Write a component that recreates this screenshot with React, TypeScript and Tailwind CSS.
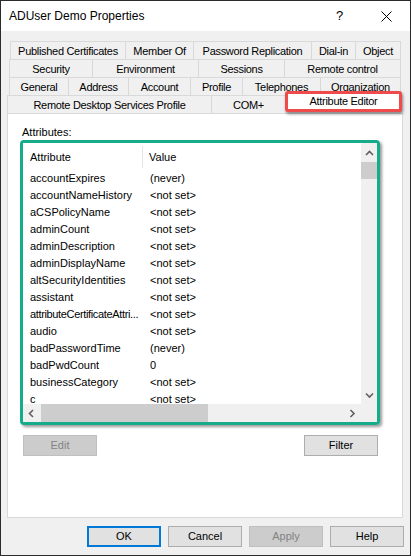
import React from "react";

type Tab = { label: string; w: string };

const row1: Tab[] = [
  { label: "Published Certificates", w: "w-[115px]" },
  { label: "Member Of", w: "w-[68px]" },
  { label: "Password Replication", w: "w-[118px]" },
  { label: "Dial-in", w: "w-[44px]" },
  { label: "Object", w: "w-[46px]" },
];
const row2: Tab[] = [
  { label: "Security", w: "w-[83px]" },
  { label: "Environment", w: "w-[106px]" },
  { label: "Sessions", w: "w-[86px]" },
  { label: "Remote control", w: "w-[117px]" },
];
const row3: Tab[] = [
  { label: "General", w: "w-[59px]" },
  { label: "Address", w: "w-[60px]" },
  { label: "Account", w: "w-[62px]" },
  { label: "Profile", w: "w-[52px]" },
  { label: "Telephones", w: "w-[78px]" },
  { label: "Organization", w: "w-[81px]" },
];
const row4: Tab[] = [
  { label: "Remote Desktop Services Profile", w: "w-[204px]" },
  { label: "COM+", w: "w-[74px]" },
];

const attrs: [string, string][] = [
  ["accountExpires", "(never)"],
  ["accountNameHistory", "<not set>"],
  ["aCSPolicyName", "<not set>"],
  ["adminCount", "<not set>"],
  ["adminDescription", "<not set>"],
  ["adminDisplayName", "<not set>"],
  ["altSecurityIdentities", "<not set>"],
  ["assistant", "<not set>"],
  ["attributeCertificateAttri...", "<not set>"],
  ["audio", "<not set>"],
  ["badPasswordTime", "(never)"],
  ["badPwdCount", "0"],
  ["businessCategory", "<not set>"],
  ["c", "<not set>"],
];

function TabRow({ tabs, ml, last }: { tabs: Tab[]; ml: string; last?: boolean }) {
  return (
    <div className={`flex h-[18px] ${ml}`}>
      {tabs.map((t, i) => (
        <div
          key={t.label}
          className={`${t.w} h-[18px] shrink-0 flex items-center justify-center pt-[1px] border-t border-l border-[#d9d9d9] bg-[#f0f0f0] whitespace-nowrap tracking-[-0.3px] ${
            i === tabs.length - 1 && !last ? "border-r" : ""
          }`}
        >
          {t.label}
        </div>
      ))}
      {last ? (
        <div className="relative z-10 -mt-[4px] w-[117px] h-[21px] shrink-0 flex items-center justify-center bg-white border-[3px] border-[#ef4a4c] rounded-[3px] shadow-[1px_2px_3px_rgba(0,0,0,0.45)] whitespace-nowrap tracking-[-0.3px]">
          Attribute Editor
        </div>
      ) : null}
    </div>
  );
}

function Chevron({ dir }: { dir: "up" | "down" | "left" | "right" }) {
  const d =
    dir === "up"
      ? "M1 5 L4.5 1.5 L8 5"
      : dir === "down"
      ? "M1 1.5 L4.5 5 L8 1.5"
      : dir === "left"
      ? "M5 1 L1.5 4.5 L5 8"
      : "M1.5 1 L5 4.5 L1.5 8";
  const w = dir === "up" || dir === "down" ? 9 : 7;
  const h = dir === "up" || dir === "down" ? 7 : 9;
  return (
    <svg width={w} height={h} viewBox={`0 0 ${w} ${h}`}>
      <path d={d} fill="none" stroke="#606060" strokeWidth="1.6" />
    </svg>
  );
}

function Btn({ label, disabled, primary, w }: { label: string; disabled?: boolean; primary?: boolean; w: string }) {
  const cls = disabled
    ? "bg-[#cccccc] border border-[#bfbfbf] text-[#838383]"
    : primary
    ? "bg-[#e1e1e1] border-2 border-[#0078d7] text-black"
    : "bg-[#e1e1e1] border border-[#adadad] text-black";
  return <div className={`${w} h-[21px] flex items-center justify-center ${cls}`}>{label}</div>;
}

export default function App() {
  return (
    <div className="w-[411px] h-[556px] border border-[#2b2b2b] bg-[#f0f0f0] flex flex-col text-[11px] text-black font-['Liberation_Sans',Arial,sans-serif] overflow-hidden">
      {/* title bar */}
      <div className="h-[30px] bg-white flex items-center shrink-0">
        <div className="pl-[8px] text-[12px] flex-1">ADUser Demo Properties</div>
        <div className="text-[13px] w-[10px] mr-[35px]">?</div>
        <svg width="11" height="11" viewBox="0 0 11 11" className="mr-[18px]">
          <path d="M0.5 0.5 L10.5 10.5 M10.5 0.5 L0.5 10.5" stroke="#000" strokeWidth="1" />
        </svg>
      </div>

      {/* tabs */}
      <div className="mt-[10px] flex flex-col">
        <TabRow tabs={row1} ml="ml-[9px]" />
        <TabRow tabs={row2} ml="ml-[8px]" />
        <TabRow tabs={row3} ml="ml-[8px]" />
        <TabRow tabs={row4} ml="ml-[6px]" last />
      </div>

      {/* panel */}
      <div className="ml-[6px] w-[396px] h-[405px] bg-white border border-[#d9d9d9] flex flex-col shrink-0">
        <div className="ml-[14px] mt-[11px] h-[14px] leading-[14px]">Attributes:</div>
        <div className="ml-[12px] mt-[1px] w-[360px] h-[285px] border-[3px] border-[#16ab89] rounded-[4px] shadow-[2px_2px_3px_rgba(0,0,0,0.4)] flex flex-col overflow-hidden">
          <div className="flex flex-1 min-h-0">
            <div className="flex-1 bg-white overflow-hidden flex flex-col">
              <div className="h-[27px] shrink-0 flex pt-[1px]">
                <div className="w-[120px] pl-[7px] flex items-center border-r border-[#e5e5e5] my-[2px]">Attribute</div>
                <div className="pl-[6px] flex items-center">Value</div>
              </div>
              {attrs.map(([a, v]) => (
                <div key={a} className="h-[17px] shrink-0 flex items-center whitespace-nowrap">
                  <div
                    className={`w-[120px] pl-[7px] ${
                      a.endsWith("...") ? "tracking-[-0.35px]" : ""
                    }`}
                  >
                    {a}
                  </div>
                  <div className="pl-[7px]">{v}</div>
                </div>
              ))}
            </div>
            <div className="w-[16px] bg-[#f0f0f0] flex flex-col">
              <div className="h-[19px] pt-[2px] flex items-center justify-center">
                <Chevron dir="up" />
              </div>
              <div className="h-[17px] bg-[#cdcdcd]" />
              <div className="flex-1" />
              <div className="h-[17px] flex items-center justify-center">
                <Chevron dir="down" />
              </div>
            </div>
          </div>
          <div className="h-[18px] flex bg-[#f0f0f0] shrink-0">
            <div className="w-[17px] flex items-center justify-center">
              <Chevron dir="left" />
            </div>
            <div className="w-[167px] h-full bg-[#cdcdcd] ml-[1px]" />
            <div className="flex-1" />
            <div className="w-[17px] flex items-center justify-center">
              <Chevron dir="right" />
            </div>
            <div className="w-[16px]" />
          </div>
        </div>
        <div className="ml-[15px] mt-[10px] w-[355px] flex justify-between">
          <Btn label="Edit" disabled w="w-[74px]" />
          <Btn label="Filter" w="w-[74px]" />
        </div>
      </div>

      {/* bottom buttons */}
      <div className="mt-[8px] flex justify-end gap-[7px] pr-[6px]">
        <Btn label="OK" primary w="w-[74px]" />
        <Btn label="Cancel" w="w-[74px]" />
        <Btn label="Apply" disabled w="w-[74px]" />
        <Btn label="Help" w="w-[74px]" />
      </div>
    </div>
  );
}
